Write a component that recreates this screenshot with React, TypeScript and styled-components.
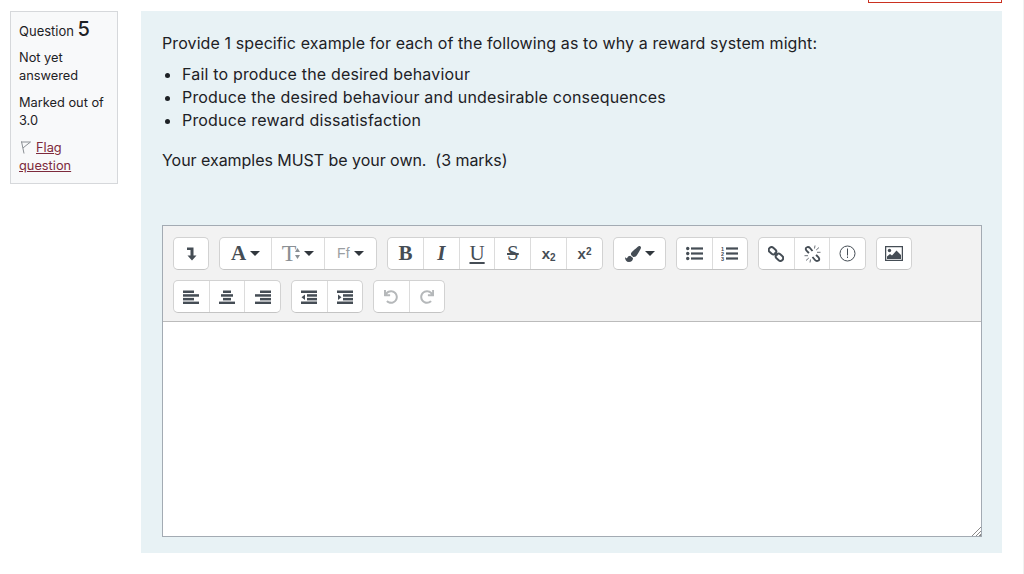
import React from 'react';
import styled, { createGlobalStyle } from 'styled-components';
import { FaPaintBrush, FaRedo, FaUndo } from 'react-icons/fa';

const GlobalStyle = createGlobalStyle`
  html, body {
    margin: 0;
    padding: 0;
    background: #fff;
    height: 574px;
    overflow: hidden;
  }
  body {
    font-family: "Inter", "Liberation Sans", sans-serif;
    color: #1d2125;
  }
`;

function Bars({ rows }: { rows: [number, number][] }) {
  return (
    <svg width="16" height="14" viewBox="0 0 16 14" fill="currentColor">
      {rows.map(([x, w], i) => (
        <rect key={i} x={x} y={i * 3.7 + 0.5} width={w} height="2.500" />
      ))}
    </svg>
  );
}

function Indent({ out }: { out?: boolean }) {
  return (
    <svg width="16" height="14" viewBox="0 0 16 14" fill="currentColor">
      <rect x="0" y="0.500" width="16" height="2.500" />
      <rect x="6" y="4.200" width="10" height="2.500" />
      <rect x="6" y="7.900" width="10" height="2.500" />
      <rect x="0" y="11.500" width="16" height="2.500" />
      <path d={out ? 'M0.500 7.300l3.500-2.800v5.600z' : 'M4.500 7.300L1 4.500v5.600z'} />
    </svg>
  );
}

function ListIcon({ numbered }: { numbered?: boolean }) {
  return (
    <svg width="17" height="15" viewBox="0 0 17 15" fill="currentColor">
      {[0, 1, 2].map((i) =>
        numbered ? (
          <text key={i} x="0" y={4.8 + i * 5} fontSize="5.500" fontFamily="Liberation Sans" fontWeight="700">
            {i + 1}
          </text>
        ) : (
          <circle key={i} cx="1.700" cy={2.5 + i * 5} r="1.700" />
        ),
      )}
      <rect x="5" y="1.400" width="12" height="2.200" />
      <rect x="5" y="6.400" width="12" height="2.200" />
      <rect x="5" y="11.400" width="12" height="2.200" />
    </svg>
  );
}

function LinkIcon() {
  return (
    <svg width="16" height="16" viewBox="0 0 16 16" fill="none" stroke="currentColor" strokeWidth="2">
      <rect x="0.500" y="2" width="8" height="5.500" rx="2.750" transform="rotate(40 4.500 4.750)" />
      <rect x="7.500" y="8.500" width="8" height="5.500" rx="2.750" transform="rotate(40 11.500 11.250)" />
      <path d="M6.500 6.500L9.500 9.500" strokeWidth="1.600" />
    </svg>
  );
}

function UnlinkIcon() {
  return (
    <svg width="17" height="18" viewBox="0 0 17 18" fill="none" stroke="currentColor">
      <path d="M8.500 6L6 3C4.700 1.500 1.700 1.800 1.700 4C1.700 5.500 3.300 6.500 5 8" strokeWidth="1.900" />
      <path d="M8.500 12L11 15C12.300 16.500 15.300 16.200 15.300 14C15.300 12.500 13.700 11.500 12 10" strokeWidth="1.900" />
      <path d="M10.500 3.500L11 0.500M12.200 5L15 2.500M13 7.300H16.500M6.500 14.500L6 17.500M4.800 13L2 15.500M4 10.700H0.500" strokeWidth="0.800" />
    </svg>
  );
}

function ImageIcon() {
  return (
    <svg width="18" height="15" viewBox="0 0 18 15">
      <rect x="0.500" y="0.500" width="17" height="14" fill="#fff" stroke="currentColor" strokeWidth="1.500" />
      <circle cx="4.500" cy="4.500" r="1.700" fill="currentColor" />
      <path d="M2 13V10.500L5 8L7 9.500L11.500 4.500L16 9V13z" fill="currentColor" />
    </svg>
  );
}

export default function App() {
  return (
    <>
      <GlobalStyle />
      <Page>
        <TopBar>
          <RedButton />
        </TopBar>
        <Question>
          <Info>
            <QNo>
              Question <b>5</b>
            </QNo>
            <InfoLine>Not yet answered</InfoLine>
            <InfoLine>Marked out of 3.0</InfoLine>
            <FlagLine>
              <FlagIcon width="11" height="13" viewBox="0 0 11 13" fill="none" stroke="#8a8f94" strokeWidth="1">
                <path d="M1.500 0.500L4 12.500M1 1H10.500L6 4.500L3 7" />
              </FlagIcon>
              <FlagLink href="#">Flag question</FlagLink>
            </FlagLine>
          </Info>
          <Content>
            <Prompt>Provide 1 specific example for each of the following as to why a reward system might:</Prompt>
            <Points>
              <li>Fail to produce the desired behaviour</li>
              <li>Produce the desired behaviour and undesirable consequences</li>
              <li>Produce reward dissatisfaction</li>
            </Points>
            <Prompt $tight>Your examples MUST be your own.&nbsp; (3 marks)</Prompt>
            <Editor>
              <Toolbar>
                <Row>
                  <Group $w={36}>
                    <Btn>
                      <svg width="11" height="15" viewBox="0 0 11 15" fill="currentColor">
                        <path d="M1 1.500H7.500V9.500H10.500L6 14.500L1.500 9.500H4.500V4H1z" />
                      </svg>
                    </Btn>
                  </Group>
                  <Group $w={158}>
                    <Btn>
                      <SerifGlyph>A</SerifGlyph>
                      <Caret />
                    </Btn>
                    <Btn>
                      <LightGlyph>T</LightGlyph>
                      <svg width="5" height="11" viewBox="0 0 5 11" fill="#8a8f94">
                        <path d="M2.500 0L5 4H0zM2.500 11L0 7h5z" />
                      </svg>
                      <Caret />
                    </Btn>
                    <Btn>
                      <SmallGlyph>Ff</SmallGlyph>
                      <Caret />
                    </Btn>
                  </Group>
                  <Group $w={216}>
                    <Btn><SerifGlyph>B</SerifGlyph></Btn>
                    <Btn><SerifGlyph $italic>I</SerifGlyph></Btn>
                    <Btn><SerifGlyph $under>U</SerifGlyph></Btn>
                    <Btn><SerifGlyph $strike>S</SerifGlyph></Btn>
                    <Btn><ScriptGlyph>x<sub>2</sub></ScriptGlyph></Btn>
                    <Btn><ScriptGlyph>x<sup>2</sup></ScriptGlyph></Btn>
                  </Group>
                  <Group $w={53}>
                    <Btn>
                      <FaPaintBrush size={16} />
                      <Caret />
                    </Btn>
                  </Group>
                  <Group $w={72}>
                    <Btn><ListIcon /></Btn>
                    <Btn><ListIcon numbered /></Btn>
                  </Group>
                  <Group $w={108}>
                    <Btn><LinkIcon /></Btn>
                    <Btn><UnlinkIcon /></Btn>
                    <Btn>
                      <svg width="17" height="17" viewBox="0 0 17 17" fill="none" stroke="currentColor" strokeWidth="1">
                        <circle cx="8.500" cy="8.500" r="7.500" />
                        <path d="M8.500 3.500V10.500M8.500 11.500V13" />
                      </svg>
                    </Btn>
                  </Group>
                  <Group $w={36}>
                    <Btn><ImageIcon /></Btn>
                  </Group>
                </Row>
                <Row>
                  <Group $w={108}>
                    <Btn><Bars rows={[[0, 11], [0, 16], [0, 11], [0, 16]]} /></Btn>
                    <Btn><Bars rows={[[4, 8], [2, 12], [4, 8], [0, 16]]} /></Btn>
                    <Btn><Bars rows={[[5, 11], [0, 16], [5, 11], [0, 16]]} /></Btn>
                  </Group>
                  <Group $w={72}>
                    <Btn><Indent out /></Btn>
                    <Btn><Indent /></Btn>
                  </Group>
                  <Group $w={72}>
                    <Btn $off><FaUndo size={14} /></Btn>
                    <Btn $off><FaRedo size={14} /></Btn>
                  </Group>
                </Row>
              </Toolbar>
              <TextArea />
            </Editor>
          </Content>
        </Question>
      </Page>
    </>
  );
}

const Page = styled.div`
  width: 1024px;
  height: 574px;
  box-sizing: border-box;
  border-right: 1px solid #f1f1f1;
  overflow: hidden;
`;

const TopBar = styled.div`
  height: 11px;
  padding-right: 21px;
  display: flex;
  justify-content: flex-end;
`;

const RedButton = styled.div`
  width: 134px;
  height: 3px;
  box-sizing: border-box;
  border: 1px solid #ca3120;
  border-top: 0;
`;

const Question = styled.div`
  display: flex;
  align-items: flex-start;
  padding-left: 10px;
`;

const Info = styled.div`
  width: 108px;
  height: 173px;
  box-sizing: border-box;
  padding: 8px 8px;
  background: #f8f9fa;
  border: 1px solid #d6d8db;
  font-size: 12.800px;
  line-height: 18px;
  margin-right: 23px;
`;

const QNo = styled.div`
  font-size: 13px;
  height: 20px;
  margin-bottom: 9px;
  b {
    font-size: 20px;
    font-weight: 500;
  }
`;

const InfoLine = styled.div`
  margin-bottom: 9px;
`;

const FlagLine = styled.div`
  margin-top: 9px;
`;

const FlagIcon = styled.svg`
  margin: 0 5px 0 1px;
  vertical-align: -2px;
`;

const FlagLink = styled.a`
  color: #7d2a3c;
  text-decoration: underline;
`;

const Content = styled.div`
  width: 861px;
  height: 542px;
  box-sizing: border-box;
  padding: 21px 20px 0 21px;
  background: #e8f2f5;
  font-size: 16px;
  letter-spacing: 0.18px;
  line-height: 23px;
`;

const Prompt = styled.p<{ $tight?: boolean }>`
  margin: 0 0 8px;
  letter-spacing: ${(p) => (p.$tight ? '-0.04px' : '0.1px')};
`;

const Points = styled.ul`
  margin: 0 0 17px;
  padding-left: 20px;
`;

const Editor = styled.div`
  margin-top: 53px;
  width: 820px;
  height: 312px;
  box-sizing: border-box;
  border: 1px solid #a3abb3;
  display: flex;
  flex-direction: column;
  background: #fff;
  letter-spacing: 0;
`;

const Toolbar = styled.div`
  height: 96px;
  box-sizing: border-box;
  padding: 11px 10px 0;
  background: #f2f2f2;
  border-bottom: 1px solid #bbb;
  display: flex;
  flex-direction: column;
  gap: 10px;
`;

const Row = styled.div`
  display: flex;
  gap: 10px;
`;

const Group = styled.div<{ $w: number }>`
  display: flex;
  width: ${(p) => p.$w}px;
  height: 33px;
  background: #fff;
  border: 1px solid #d2d2d2;
  border-bottom-color: #c4c4c4;
  border-radius: 5px;
  box-sizing: border-box;
`;

const Btn = styled.div<{ $off?: boolean }>`
  flex: 1 1 0;
  box-sizing: border-box;
  display: flex;
  align-items: center;
  justify-content: center;
  gap: 4px;
  color: ${(p) => (p.$off ? '#b5b8ba' : '#454d55')};
  border-left: 1px solid #dcdcdc;
  &:first-child {
    border-left: 0;
  }
`;

const SerifGlyph = styled.span<{ $italic?: boolean; $under?: boolean; $strike?: boolean }>`
  font-family: "Liberation Serif", serif;
  font-size: 21px;
  font-style: ${(p) => (p.$italic ? 'italic' : 'normal')};
  text-decoration: ${(p) => (p.$under ? 'underline' : p.$strike ? 'line-through' : 'none')};
  font-weight: ${(p) => (p.$strike || p.$under ? 400 : 700)};
`;

const LightGlyph = styled.span`
  font-family: "Liberation Serif", serif;
  font-size: 24px;
  color: #8a8f94;
  margin-right: -5px;
`;

const SmallGlyph = styled.span`
  font-family: "Liberation Sans", sans-serif;
  font-size: 14px;
  color: #9a9ea2;
`;

const ScriptGlyph = styled.span`
  font-family: "Liberation Sans", sans-serif;
  font-size: 15px;
  font-weight: 700;
  line-height: 1;
  sub, sup {
    font-size: 10px;
    line-height: 0;
  }
  sub {
    vertical-align: -2px;
  }
  sup {
    vertical-align: 4px;
  }
`;

const Caret = styled.i`
  width: 0;
  height: 0;
  border-left: 5px solid transparent;
  border-right: 5px solid transparent;
  border-top: 5px solid #31373d;
`;

const TextArea = styled.div`
  flex: 1;
  background-color: #fff;
  background-image: linear-gradient(135deg, transparent 0 60%, #8a8a8a 60% 66%, transparent 66% 76%, #8a8a8a 76% 82%, transparent 82% 90%, #8a8a8a 90% 96%, transparent 96%);
  background-size: 12px 12px;
  background-position: right bottom;
  background-repeat: no-repeat;
`;
